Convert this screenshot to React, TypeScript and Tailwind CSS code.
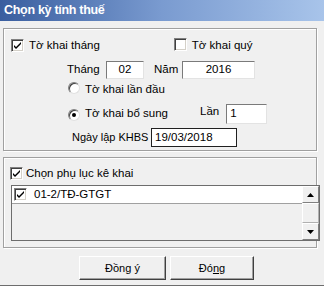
import React from "react";

function Check({ checked }: { checked?: boolean }) {
  return (
    <span className="inline-flex w-[13px] h-[13px] shrink-0 items-center justify-center bg-white border border-t-[#808080] border-l-[#808080] border-r-white border-b-white shadow-[inset_1px_1px_0_#404040,inset_-1px_-1px_0_#d4d0c8]">
      {checked && (
        <svg viewBox="0 0 9 9" className="w-[9px] h-[9px]">
          <path d="M1 4 L3 6 L8 1 L8 3 L3 8 L1 6 Z" fill="#000" />
        </svg>
      )}
    </span>
  );
}

function Radio({ checked }: { checked?: boolean }) {
  return (
    <span className="relative inline-flex w-[12px] h-[12px] shrink-0 items-center justify-center rounded-full bg-white border border-t-[#808080] border-l-[#808080] border-r-[#e0e0e0] border-b-[#e0e0e0] shadow-[inset_1px_1px_0_#404040]">
      {checked && <span className="w-[4px] h-[4px] rounded-full bg-black" />}
    </span>
  );
}

function Field({ value, className }: { value: string; className: string }) {
  return (
    <div
      className={
        "h-[18px] bg-white border border-t-[#7a7a7a] border-l-[#7a7a7a] border-r-[#e3e3e3] border-b-[#e3e3e3] flex items-center " +
        className
      }
    >
      {value}
    </div>
  );
}

function Button({ children, className }: { children: React.ReactNode; className: string }) {
  return (
    <button
      className={
        "h-[24px] bg-[#f0f0f0] border border-t-white border-l-white border-r-[#404040] border-b-[#404040] shadow-[inset_-1px_-1px_0_#a0a0a0] flex items-center justify-center text-[11px] " +
        className
      }
    >
      {children}
    </button>
  );
}

export default function App() {
  return (
    <div className="w-[324px] h-[292px] bg-white text-black text-[11.5px] leading-none font-['Liberation_Sans',Arial,sans-serif] overflow-hidden">
      <div className="w-[324px] h-[286px] bg-[#f0f0f0] border-b border-[#6d6d6d] flex flex-col">
        {/* Title bar */}
        <div className="h-[21px] shrink-0 bg-gradient-to-r from-[#3a5e9f] via-[#7a9bd0] to-[#a8c4ea] flex items-center pl-[4px]">
          <span className="text-white font-bold text-[12.5px] tracking-[-0.3px]">
            Chọn kỳ tính thuế
          </span>
        </div>

        {/* Group 1 */}
        <div className="ml-[3px] mt-[7px] w-[314px] h-[123px] shrink-0 border border-[#a0a0a0] shadow-[inset_1px_1px_0_#fff,1px_1px_0_#fff] flex flex-col">
          <div className="flex items-center h-[13px] mt-[10px]">
            <span className="ml-[7px]"><Check checked /></span>
            <span className="ml-[5px]">Tờ khai tháng</span>
            <span className="ml-[74px]"><Check /></span>
            <span className="ml-[5px]">Tờ khai quý</span>
          </div>
          <div className="flex items-center h-[18px] mt-[9px]">
            <span className="ml-[63px] w-[39px]">Tháng</span>
            <Field value="02" className="w-[38px] justify-center" />
            <span className="ml-[10px] w-[28px]">Năm</span>
            <Field value="2016" className="w-[73px] justify-center" />
          </div>
          <div className="flex items-center h-[13px] mt-[4px]">
            <span className="ml-[64px]"><Radio /></span>
            <span className="ml-[5px]">Tờ khai lần đầu</span>
          </div>
          <div className="flex items-center h-[20px] mt-[8px]">
            <span className="ml-[64px]"><Radio checked /></span>
            <span className="ml-[5px] w-[115px]">Tờ khai bổ sung</span>
            <span className="mb-[4px]">Lần</span>
            <Field value="1" className="ml-[7px] w-[41px] h-[20px] pl-[3px]" />
          </div>
          <div className="flex items-center h-[19px] mt-[4px]">
            <span className="ml-[68px] w-[79px] text-[11px]">Ngày lập KHBS</span>
            <div className="w-[86px] h-[19px] bg-white border border-[#202020] flex items-center pl-[3px]">
              19/03/2018
            </div>
          </div>
        </div>

        {/* Group 2 */}
        <div className="ml-[3px] mt-[6px] w-[314px] h-[91px] shrink-0 border border-[#a0a0a0] shadow-[inset_1px_1px_0_#fff,1px_1px_0_#fff] flex flex-col">
          <div className="flex items-center h-[13px] mt-[9px]">
            <span className="ml-[6px]"><Check checked /></span>
            <span className="ml-[3px]">Chọn phụ lục kê khai</span>
          </div>
          <div className="ml-[7px] mt-[5px] w-[309px] h-[56px] border border-[#6d6d6d] flex">
            <div className="flex-1 flex flex-col">
              <div className="h-[18px] bg-white border-b border-[#a0a0a0] flex items-center">
                <span className="ml-[2px]"><Check checked /></span>
                <span className="ml-[7px]">01-2/TĐ-GTGT</span>
              </div>
              <div className="flex-1 bg-[#f0f0f0]" />
            </div>
            <div className="w-[17px] flex flex-col bg-[#f4f4f4]">
              <div className="h-[17px] bg-[#f0f0f0] border border-t-white border-l-white border-r-[#808080] border-b-[#808080] flex items-center justify-center">
                <svg viewBox="0 0 7 4" className="w-[7px] h-[4px]"><path d="M3.5 0 L7 4 L0 4 Z" fill="#000" /></svg>
              </div>
              <div className="flex-1 bg-[#f0f0f0] border border-t-white border-l-white border-r-[#b0b0b0] border-b-[#b0b0b0]" />
              <div className="h-[17px] bg-[#f0f0f0] border border-t-white border-l-white border-r-[#808080] border-b-[#808080] flex items-center justify-center">
                <svg viewBox="0 0 7 4" className="w-[7px] h-[4px]"><path d="M0 0 L7 0 L3.5 4 Z" fill="#000" /></svg>
              </div>
            </div>
          </div>
        </div>

        {/* Buttons */}
        <div className="flex mt-[8px] ml-[79px] gap-[4px]">
          <Button className="w-[87px]">Đồng ý</Button>
          <Button className="w-[84px]">
            <span>
              Đó<span className="underline">n</span>g
            </span>
          </Button>
        </div>
      </div>
    </div>
  );
}
